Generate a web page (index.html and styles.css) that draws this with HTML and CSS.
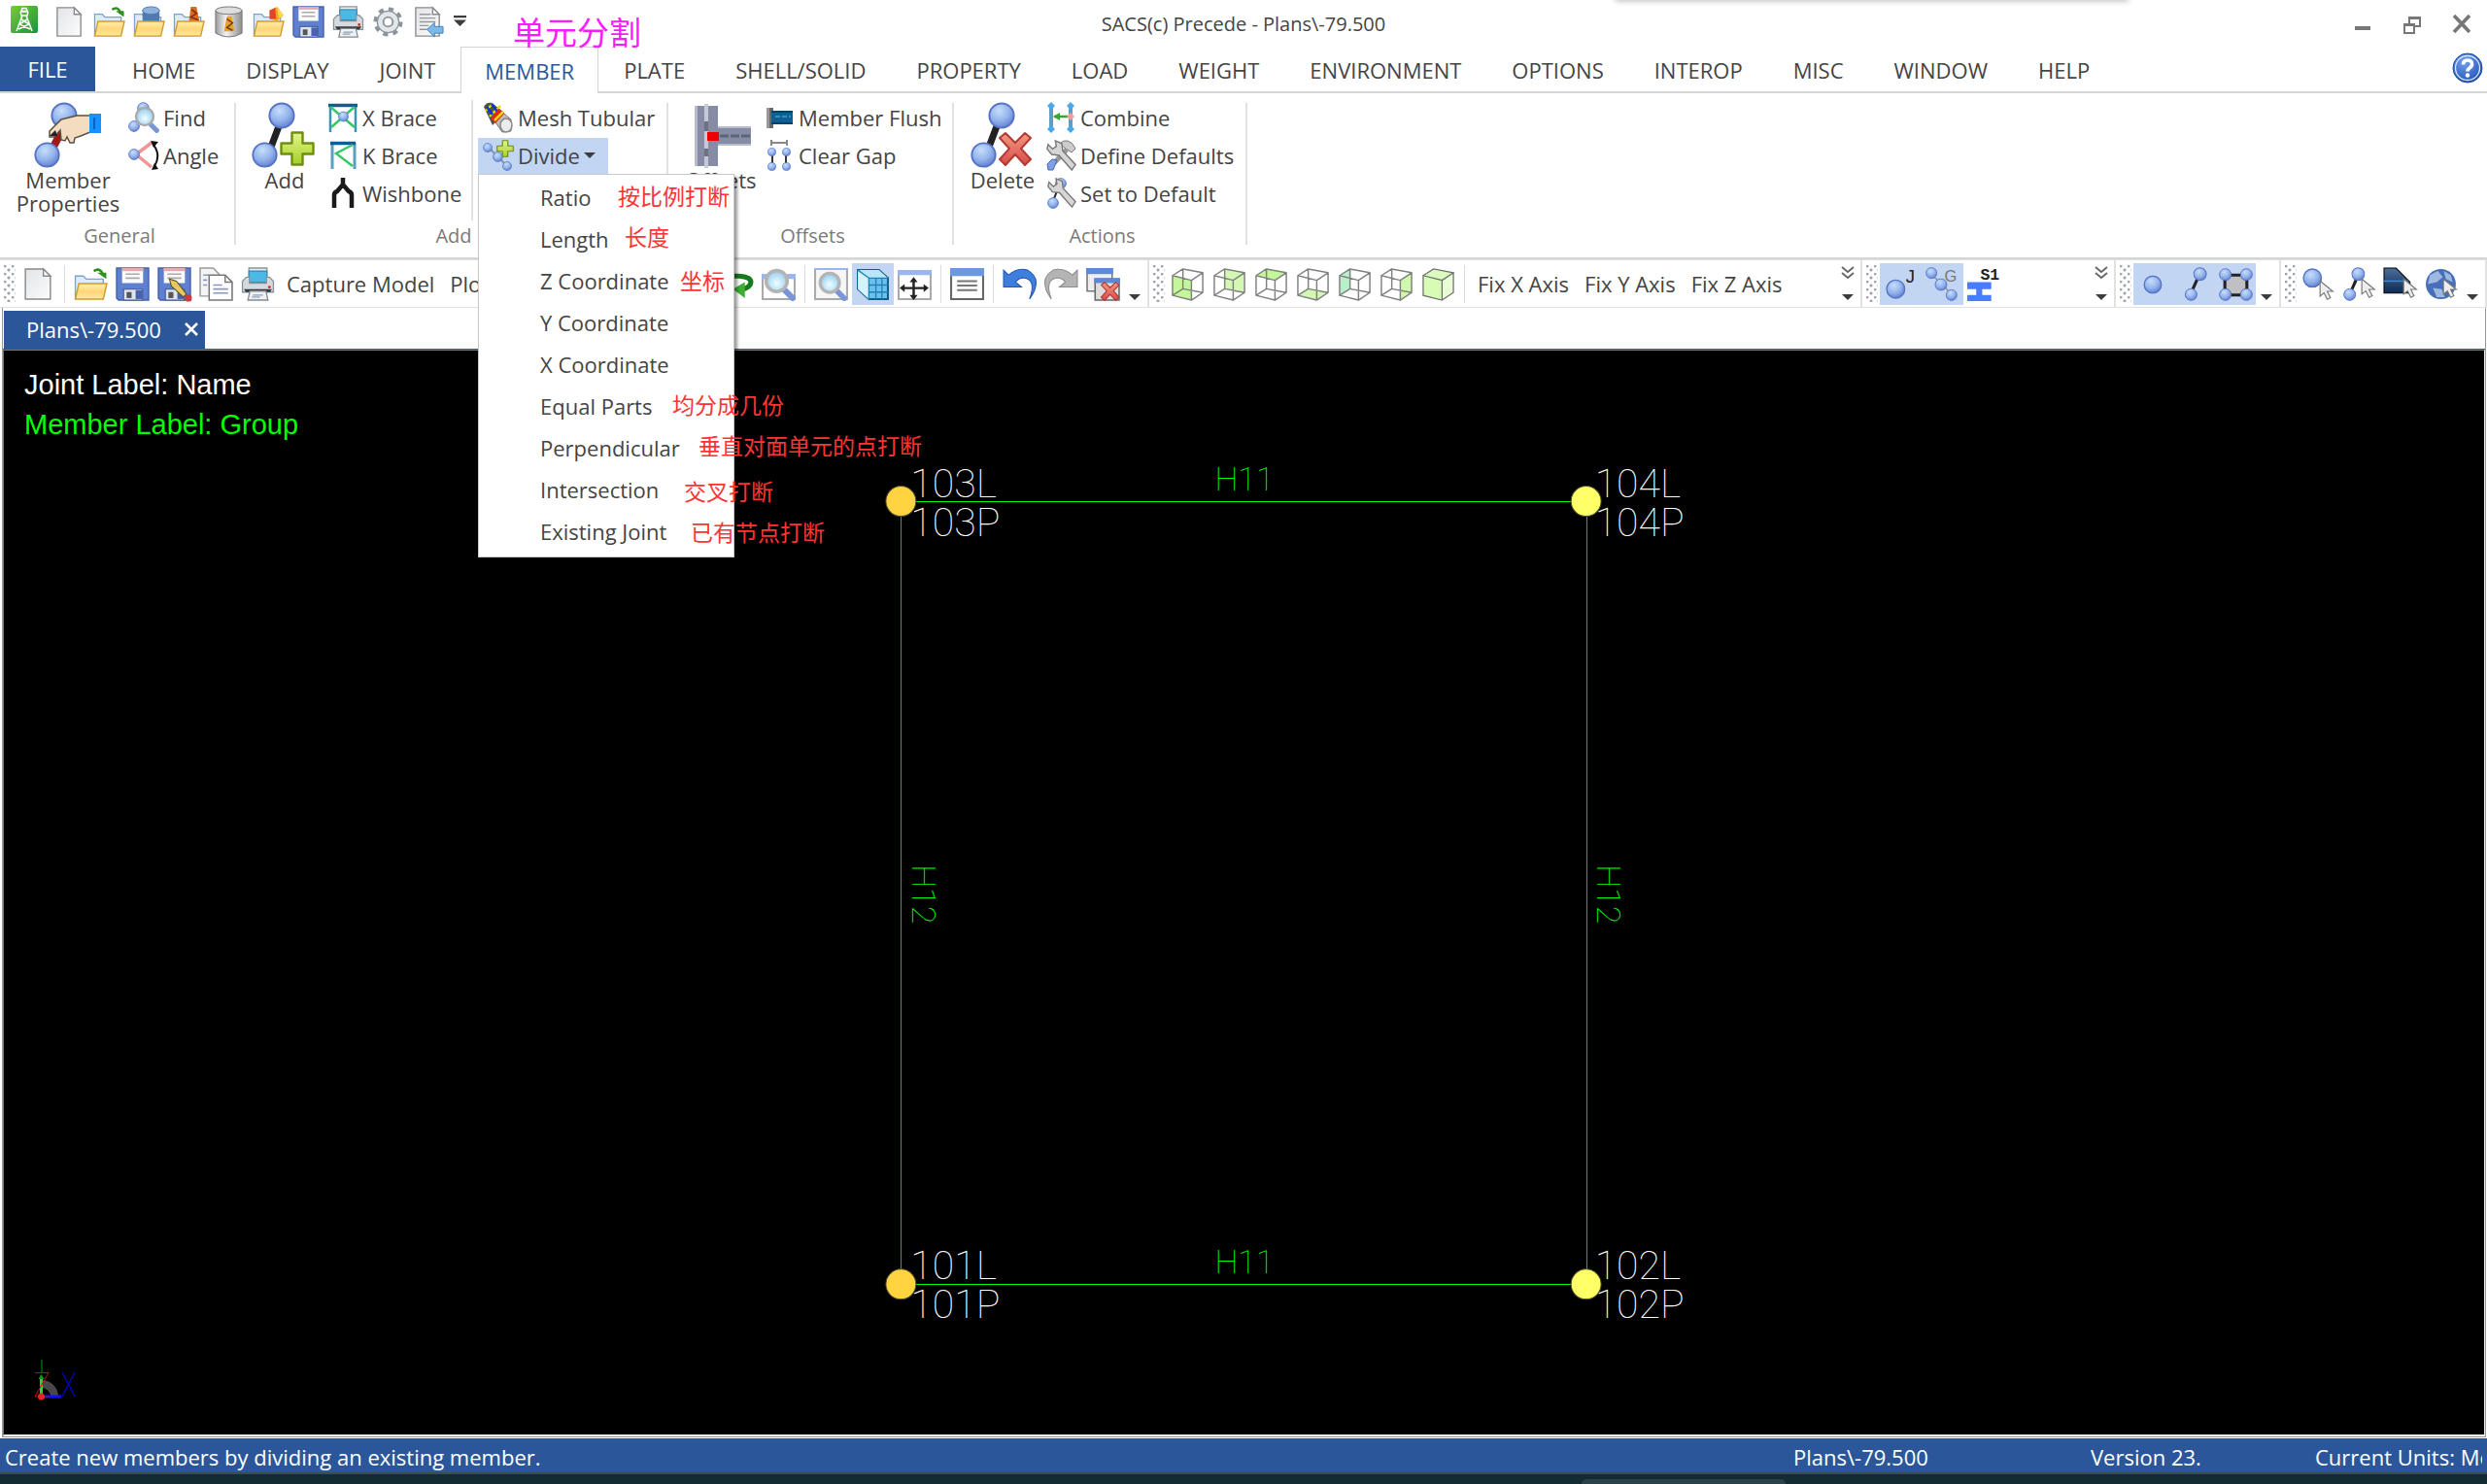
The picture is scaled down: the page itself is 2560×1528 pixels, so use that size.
FILE: index.html
```html
<!DOCTYPE html>
<html lang="en">
<head>
<meta charset="utf-8">
<title>SACS(c) Precede - Plans\-79.500</title>
<link rel="stylesheet" href="styles.css">
</head>
<body>
<svg class="defs" width="0" height="0" aria-hidden="true">
  <defs>
    <radialGradient id="gBall" cx=".4" cy=".3" r=".75"><stop offset="0" stop-color="#c6defb"/><stop offset=".55" stop-color="#94b4ec"/><stop offset="1" stop-color="#5f79cf"/></radialGradient>
    <linearGradient id="gFolder" x2="0" y2="1"><stop offset="0" stop-color="#fff0b8"/><stop offset=".5" stop-color="#ffd676"/><stop offset="1" stop-color="#fbe7a0"/></linearGradient>
    <linearGradient id="gGreen" x2="1" y2="1"><stop offset="0" stop-color="#7cc93c"/><stop offset="1" stop-color="#16953a"/></linearGradient>
    <linearGradient id="gPage" x2="1" y2="1"><stop offset="0" stop-color="#e2e4e8"/><stop offset="1" stop-color="#fcfcfc"/></linearGradient>
    <linearGradient id="gPlus" x2="0" y2="1"><stop offset="0" stop-color="#e4f58a"/><stop offset="1" stop-color="#a6cf2a"/></linearGradient>
    <linearGradient id="gRed" x2="0" y2="1"><stop offset="0" stop-color="#f29a80"/><stop offset="1" stop-color="#d94a4a"/></linearGradient>
    <linearGradient id="gCyl" x2="1" y2="0"><stop offset="0" stop-color="#9a9a9a"/><stop offset=".4" stop-color="#f4f4f4"/><stop offset="1" stop-color="#8c8c8c"/></linearGradient>
    <linearGradient id="gNavy" x2="0" y2="1"><stop offset="0" stop-color="#4a6f9c"/><stop offset="1" stop-color="#0d2a52"/></linearGradient>
    <radialGradient id="gLens" cx=".5" cy=".6" r=".6"><stop offset="0" stop-color="#f2feff"/><stop offset="1" stop-color="#8ecdf0"/></radialGradient>
    <radialGradient id="gHelp" cx=".4" cy=".3" r=".8"><stop offset="0" stop-color="#6ea0f0"/><stop offset="1" stop-color="#1c4bb0"/></radialGradient>
  </defs>
  <symbol id="ball" viewBox="0 0 20 20"><circle cx="10" cy="10" r="9" fill="url(#gBall)" stroke="#5674c6" stroke-width="1.4"/></symbol>
  <symbol id="page" viewBox="0 0 34 34"><path d="M4 2h18l7 7v23H4z" fill="url(#gPage)" stroke="#8a8a8a" stroke-width="1.4"/><path d="M22 2v7h7z" fill="#fff" stroke="#8a8a8a" stroke-width="1.4"/></symbol>
  <symbol id="folder" viewBox="0 0 34 34"><path d="M1.500 31V9h8l3 3h17v12z" fill="#dcecfa" stroke="#7da3cc" stroke-width="1.300"/><path d="M5 16.500h28l-3.500 15.500H1.500z" fill="url(#gFolder)" stroke="#d29a2c" stroke-width="1.400"/></symbol>
  <symbol id="open" viewBox="0 0 34 34"><use href="#folder"/><path d="M20 4q6-4 9 3" fill="none" stroke="#2f8f1e" stroke-width="2.500"/><path d="M25 6h7v5z" fill="#2f8f1e" stroke="#2f8f1e"/></symbol>
  <symbol id="floppy" viewBox="0 0 34 34"><path d="M1 1h32v32H3l-2-2z" fill="#5f7fcf" stroke="#4560ae" stroke-width="1.400"/><path d="M6.500 1h21v15h-21z" fill="#fafafa"/><path d="M6.500 1h21v3h-21z" fill="#e2abb4"/><path d="M10 7h14M10 11h14" stroke="#aaa" stroke-width="1.600"/><path d="M8 22h19v11H8z" fill="#dfe4ec" stroke="#3f5595"/><path d="M11 25h5v6h-5z" fill="#555"/><path d="M20 23h7v9h-7z" fill="#4962ac"/></symbol>
  <symbol id="printer" viewBox="0 0 34 34"><path d="M8 1h18v10H8z" fill="#e8eef2" stroke="#8a949c" stroke-width="1.300"/><path d="M8 4h18v11H8z" fill="#4cb8e4" stroke="#2b86b2"/><path d="M1.500 14l4-4h3v6h17v-6h3l4 4v11h-31z" fill="#d4dade" stroke="#8a9298" stroke-width="1.300"/><path d="M3 22h28l-2 3H5z" fill="#34383c"/><path d="M9 24h16l2 9H7z" fill="#eef2f4" stroke="#7f8a92" stroke-width="1.300"/><path d="M12 28h10M11 30h8" stroke="#8fa0b4" stroke-width="1.200"/><circle cx="28.500" cy="20" r="1.400" fill="#e02020"/></symbol>
  <symbol id="plus" viewBox="0 0 36 36"><path d="M12.500 1.500h11v11h11v11h-11v11h-11v-11h-11v-11h11z" fill="url(#gPlus)" stroke="#6e8f10" stroke-width="2.400" stroke-linejoin="round"/></symbol>
  <symbol id="cross" viewBox="0 0 36 36"><path d="M2 7l6-5 10 10L28 2l6 5-10 11 10 11-6 6-10-11L8 35l-6-6 10-11z" fill="url(#gRed)" stroke="#b43a34" stroke-width="2" stroke-linejoin="round"/></symbol>
  <symbol id="lens" viewBox="0 0 34 34"><path d="M22 22l9 9" stroke="#7b96d6" stroke-width="6" stroke-linecap="round"/><circle cx="15" cy="14" r="10.500" fill="url(#gLens)" stroke="#b4b4b4" stroke-width="3.500"/></symbol>
  <symbol id="wrench" viewBox="0 0 34 34"><path d="M3 5l5 5 4-3-1-6 7 3 1 8 14 15-4 6-14-16-8-1-5-6z" fill="#d6d6d6" stroke="#777" stroke-width="1.500"/></symbol>
  <symbol id="cursor" viewBox="0 0 20 26"><path d="M2 1v19l5-4 4 8 4-2-4-8h7z" fill="#eee" stroke="#777" stroke-width="1.400"/></symbol>
  <symbol id="wire" viewBox="0 0 36 36"><path d="M2 9l20 5v21L2 30zM2 9L13 2l21 4-12 8M34 6v21l-12 8M13 2v21L2 30M13 23l21 4" fill="none" stroke="#808080" stroke-width="1.500" stroke-linejoin="round"/></symbol>
  <symbol id="caret" viewBox="0 0 12 8"><path d="M0 1h12L6 7z" fill="#3c3c3c"/></symbol>
  <symbol id="chev" viewBox="0 0 14 14"><path d="M1 1l6 5 6-5M1 7l6 5 6-5" fill="none" stroke="#666" stroke-width="1.800"/></symbol>
</svg>

<header class="titlebar">
  <div class="qat">
    <svg class="app-icon" viewBox="0 0 28 28"><rect width="28" height="28" rx="2" fill="url(#gGreen)"/><path d="M10 6h8M10 6l1 4h6l1-4M12 2.500h4l1 3h-6zM12 10L6 26M16 10l6 16M11 14l8 5-11 5M17 14l-8 5 11 5" fill="none" stroke="#fff" stroke-width="1.500"/></svg>
    <button class="qbtn" aria-label="New"><svg><use href="#page"/></svg></button>
    <button class="qbtn" aria-label="Open"><svg><use href="#open"/></svg></button>
    <button class="qbtn" aria-label="Open database"><svg viewBox="0 0 34 34"><use href="#folder"/><path d="M10 5v11h18V5z" fill="#4e7bb0"/><ellipse cx="19" cy="5" rx="9" ry="4" fill="#8fb2dc" stroke="#4e7bb0"/></svg></button>
    <button class="qbtn" aria-label="Open structure"><svg viewBox="0 0 34 34"><use href="#folder"/><path d="M19 1h6l3 15H17z" fill="#d96a1c"/><path d="M20 4l5 4-6 4 8 3" fill="none" stroke="#7d2a10" stroke-width="1.500"/></svg></button>
    <button class="qbtn" aria-label="Database"><svg viewBox="0 0 34 34"><path d="M3 5v24q14 8 28 0V5z" fill="url(#gCyl)" stroke="#777"/><ellipse cx="17" cy="5" rx="14" ry="4" fill="#ddd" stroke="#777"/><path d="M15 11h5l3 16H12z" fill="#e9a120"/><path d="M15 14l6 4-6 5 6 3" fill="none" stroke="#703c10" stroke-width="1.500"/></svg></button>
    <button class="qbtn" aria-label="Import"><svg viewBox="0 0 34 34"><use href="#folder"/><path d="M18 5l8-4 7 9-7 6-8-2z" fill="#f3a52a"/><path d="M18 5l6-3 1 12-7 0z" fill="#e0452a"/><path d="M26 2l7 8-5 3z" fill="#f7dc4a"/></svg></button>
    <button class="qbtn" aria-label="Save"><svg><use href="#floppy"/></svg></button>
    <button class="qbtn" aria-label="Print"><svg><use href="#printer"/></svg></button>
    <button class="qbtn" aria-label="Settings"><svg viewBox="0 0 34 34"><circle cx="17" cy="17" r="13.500" fill="none" stroke="#8c939c" stroke-width="4" stroke-dasharray="5.300 5.300"/><circle cx="17" cy="17" r="11.500" fill="#e4e7ea" stroke="#8c939c" stroke-width="1.300"/><circle cx="17" cy="17" r="5" fill="#fff" stroke="#8c939c" stroke-width="2"/></svg></button>
    <button class="qbtn" aria-label="Report"><svg viewBox="0 0 34 34"><use href="#page"/><path d="M8 9h12M8 13h17M8 17h17M8 21h10M8 25h8" stroke="#9a9a9a" stroke-width="1.500"/><path d="M16 25l8-7v4h9v7h-9v4z" fill="#7db8e8" stroke="#3f83c0"/></svg></button>
    <button class="qmore" aria-label="Customize"><svg viewBox="0 0 16 14"><path d="M1 1h14v2.500H1zM1 6h14l-7 7z" fill="#3c3c3c"/></svg></button>
  </div>
  <h1 class="title">SACS(c) Precede - Plans\-79.500</h1>
  <div class="winctl">
    <button aria-label="Minimize"><svg viewBox="0 0 20 20"><path d="M2 12h16v4H2z" fill="#777"/></svg></button>
    <button aria-label="Restore"><svg viewBox="0 0 20 20"><path d="M7 3h11v9H7z" fill="none" stroke="#777" stroke-width="2"/><path d="M2 10h10v9H2z" fill="#fff" stroke="#777" stroke-width="2"/><path d="M1 9h12v3H1zM6 2h13v3H6z" fill="#777"/></svg></button>
    <button aria-label="Close"><svg viewBox="0 0 20 20"><path d="M2 1l16 17M18 1L2 18" stroke="#777" stroke-width="3.600"/></svg></button>
  </div>
  <div class="top-shade"></div>
  <span class="note note-title">单元分割</span>
</header>

<nav class="tabs">
  <button class="tab tab-file">FILE</button>
  <button class="tab">HOME</button>
  <button class="tab">DISPLAY</button>
  <button class="tab">JOINT</button>
  <button class="tab tab-active">MEMBER</button>
  <button class="tab">PLATE</button>
  <button class="tab">SHELL/SOLID</button>
  <button class="tab">PROPERTY</button>
  <button class="tab">LOAD</button>
  <button class="tab">WEIGHT</button>
  <button class="tab">ENVIRONMENT</button>
  <button class="tab">OPTIONS</button>
  <button class="tab">INTEROP</button>
  <button class="tab">MISC</button>
  <button class="tab">WINDOW</button>
  <button class="tab">HELP</button>
  <button class="help" aria-label="Help topics"><svg viewBox="0 0 32 32"><circle cx="16" cy="16" r="15" fill="url(#gHelp)" stroke="#1f4aa0"/><circle cx="16" cy="16" r="12.500" fill="none" stroke="#dbe7fb" stroke-width="1.300"/><path d="M11.500 12.500q0-4.500 4.500-4.500t4.500 4q0 2.500-2.500 4-2 1.300-2 3.500" fill="none" stroke="#fff" stroke-width="3.600"/><circle cx="16" cy="23.500" r="2.200" fill="#fff"/></svg></button>
</nav>

<section class="ribbon">
  <div class="group g-general">
    <div class="gbody">
      <button class="large wide"><svg viewBox="0 0 70 70"><use href="#ball" x="17" y="2" width="28" height="28"/><path d="M28 33L19 50" stroke="#a01818" stroke-width="8"/><use href="#ball" x="0" y="43" width="27" height="27"/><path d="M58 16l-14 0-16 4-12 12 0 6 5 0 6-7 1 10 4 1 2-4 3 6 4 0 1-5 6-2 10-4z" fill="#f3dcc0" stroke="#5a5048" stroke-width="1.500"/><path d="M16 37l6-6 2 6z" fill="#222"/><path d="M57 14h12v20H57z" fill="#1493ff"/><path d="M61 18h2v12h-2z" fill="#0560c8"/></svg><span>Member<br>Properties</span></button>
      <div class="stack">
        <button class="row"><svg viewBox="0 0 32 32"><use href="#ball" x="9" y="0" width="13" height="13"/><use href="#ball" x="0" y="19" width="12" height="12"/><path d="M22 22l9 9" stroke="#7b96d6" stroke-width="5"/><circle cx="17" cy="15" r="9" fill="url(#gLens)" stroke="#aaa" stroke-width="2.400"/></svg>Find</button>
        <button class="row"><svg viewBox="0 0 32 32"><path d="M8 15L24 3M8 15l16 13" stroke="#f19595" stroke-width="3.500"/><use href="#ball" x="0" y="9" width="12" height="12"/><path d="M26 5q8 11 1 22" fill="none" stroke="#111" stroke-width="2"/><path d="M23 1l8 1-5 6zM24 31l7-1-4-6z" fill="#111"/></svg>Angle</button>
      </div>
    </div>
    <div class="glabel">General</div>
  </div>
  <div class="group g-add">
    <div class="gbody">
      <button class="large"><svg viewBox="0 0 70 70"><path d="M29 27l-9 24" stroke="#222" stroke-width="7"/><use href="#ball" x="18" y="2" width="28" height="28"/><use href="#ball" x="1" y="43" width="27" height="27"/><use href="#plus" x="30" y="32" width="36" height="36"/></svg><span>Add</span></button>
      <div class="stack braces">
        <button class="row"><svg viewBox="0 0 32 32"><path d="M3 31V4M29 31V4" stroke="#3c94b4" stroke-width="2.500"/><path d="M1 3.500h30" stroke="#0e5e94" stroke-width="3.500"/><path d="M3 5l25 21M28 5L4 26" stroke="#38c868" stroke-width="2.500"/><use href="#ball" x="11" y="9" width="11" height="12"/></svg>X Brace</button>
        <button class="row"><svg viewBox="0 0 32 32"><path d="M5 30V3M28 30V3" stroke="#5ba0bf" stroke-width="3"/><path d="M3 3.500h26" stroke="#0e5e94" stroke-width="3.500"/><path d="M26 5L9 14l17 13" fill="none" stroke="#38c868" stroke-width="2.500"/></svg>K Brace</button>
        <button class="row"><svg viewBox="0 0 32 32"><path d="M16 0v8M7 31V18q0-3 3-4l6-7 6 7q3 1 3 4v13" fill="none" stroke="#1a1a1a" stroke-width="4.500"/></svg>Wishbone</button>
      </div>
      <div class="inner-sep"></div>
      <div class="stack">
        <button class="row"><svg viewBox="0 0 32 32"><path d="M2 5l7-4 20 17 0 12-9 1z" fill="#bdbdbd" stroke="#777"/><path d="M1 5q3-5 8-4l13 10-12 13z" fill="#4a554a"/><path d="M3 9l7-7M7 15l11-11" stroke="#d8e000" stroke-width="2.400"/><path d="M4 5l6 8M9 2l6 8" stroke="#1030e0" stroke-width="2.600"/><path d="M8 17l8-10 6 5-9 10z" fill="#e02818"/><path d="M12 19l9-9" stroke="#f6d800" stroke-width="2.500"/><ellipse cx="24" cy="24" rx="6" ry="7" fill="#ececec" stroke="#888" stroke-width="1.500"/></svg>Mesh Tubular</button>
        <div class="divide">
          <button class="row row-open" aria-expanded="true"><svg viewBox="0 0 32 32"><path d="M6 8l10 10 10 10" stroke="#8a94a4" stroke-width="2"/><use href="#ball" x="0" y="3" width="10" height="10"/><use href="#ball" x="10" y="12" width="11" height="11"/><use href="#ball" x="20" y="22" width="10" height="10"/><use href="#plus" x="14" y="0" width="18" height="18"/></svg>Divide<svg class="caret"><use href="#caret"/></svg></button>
          <ul class="menu">
            <li><button>Ratio</button></li>
            <li><button>Length</button></li>
            <li><button>Z Coordinate</button></li>
            <li><button>Y Coordinate</button></li>
            <li><button>X Coordinate</button></li>
            <li><button>Equal Parts</button></li>
            <li><button>Perpendicular</button></li>
            <li><button>Intersection</button></li>
            <li><button>Existing Joint</button></li>
          </ul>
          <span class="note n1">按比例打断</span>
          <span class="note n2">长度</span>
          <span class="note n3">坐标</span>
          <span class="note n4">均分成几份</span>
          <span class="note n5">垂直对面单元的点打断</span>
          <span class="note n6">交叉打断</span>
          <span class="note n7">已有节点打断</span>
        </div>
      </div>
    </div>
    <div class="glabel">Add</div>
  </div>
  <div class="group g-offsets">
    <div class="gbody">
      <button class="large mid"><svg viewBox="0 0 70 70"><path d="M8 6h24v62H8z" fill="#858ca4"/><path d="M8 6h3v62H8z" fill="#b6bccb"/><path d="M20 4v66" stroke="#c3c9d6" stroke-width="4"/><path d="M20 22v10M20 50v8" stroke="#6c7282" stroke-width="4"/><path d="M32 27h34v20H32z" fill="#858ca4"/><path d="M32 28h34M32 46h34" stroke="#b6bccb" stroke-width="2"/><path d="M34 37h32" stroke="#5c6476" stroke-width="3" stroke-dasharray="9 2"/><path d="M21 33h12v9H21z" fill="#ee0000"/></svg><span>Offsets</span></button>
      <div class="stack">
        <button class="row"><svg viewBox="0 0 32 32"><path d="M3 6h7v21H3z" fill="#6a6a6a"/><path d="M3 6h3v21H3z" fill="#999"/><path d="M8 9h22v14H8z" fill="#0d5f95"/><path d="M8 9h22v2H8zM8 21h22v2H8z" fill="#064166"/><path d="M12 15h16" stroke="#4d9ac8" stroke-width="1.500" stroke-dasharray="5 2"/></svg>Member Flush</button>
        <button class="row"><svg viewBox="0 0 32 32"><path d="M8 3h16M8 0v6M24 0v6" stroke="#888" stroke-width="2"/><path d="M9 12v16M23 12v16" stroke="#222" stroke-width="1.800"/><use href="#ball" x="4" y="8" width="9" height="9"/><use href="#ball" x="19" y="8" width="9" height="9"/><use href="#ball" x="4" y="23" width="9" height="9"/><use href="#ball" x="19" y="23" width="9" height="9"/></svg>Clear Gap</button>
      </div>
    </div>
    <div class="glabel">Offsets</div>
  </div>
  <div class="group g-actions">
    <div class="gbody">
      <button class="large"><svg viewBox="0 0 70 70"><path d="M29 27l-9 24" stroke="#222" stroke-width="7"/><use href="#ball" x="20" y="2" width="28" height="28"/><use href="#ball" x="2" y="43" width="27" height="27"/><use href="#cross" x="30" y="32" width="36" height="36"/></svg><span>Delete</span></button>
      <div class="stack">
        <button class="row"><svg viewBox="0 0 32 32"><path d="M6 4v24M26 4v24" stroke="#5ba0bf" stroke-width="4"/><path d="M6 0l4 4-4 4-4-4zM26 0l4 4-4 4-4-4zM6 24l4 4-4 4-4-4zM26 24l4 4-4 4-4-4z" fill="#49a8ea"/><path d="M9 15h14" stroke="#2fa82f" stroke-width="2.500"/><path d="M8 15l7-4v8z" fill="#2fa82f"/><path d="M26 11l4 4-4 4-4-4z" fill="#f79a9a"/></svg>Combine</button>
        <button class="row"><svg viewBox="0 0 32 32"><path d="M15 4q3-4 8-3t8 8l-4 4-6-4z" fill="#ccc" stroke="#777"/><path d="M22 10L9 24" stroke="#9a9a9a" stroke-width="5"/><path d="M12 21l-4 10-5 0-1-6 5-5z" fill="#7fa0e2" stroke="#4a68b8"/><use href="#wrench" x="0" y="0" width="32" height="32"/></svg>Define Defaults</button>
        <button class="row"><svg viewBox="0 0 32 32"><path d="M15 6L8 24" stroke="#222" stroke-width="2"/><use href="#ball" x="10" y="0" width="12" height="12"/><use href="#wrench" x="1" y="0" width="31" height="31"/><use href="#ball" x="2" y="20" width="12" height="12"/></svg>Set to Default</button>
      </div>
    </div>
    <div class="glabel">Actions</div>
  </div>
</section>

<div class="bands">
  <div class="band">
    <i class="grip"></i>
    <button class="tool" aria-label="New"><svg><use href="#page"/></svg></button>
    <i class="sep"></i>
    <button class="tool" aria-label="Open"><svg><use href="#open"/></svg></button>
    <button class="tool" aria-label="Save"><svg><use href="#floppy"/></svg></button>
    <button class="tool" aria-label="Save as"><svg viewBox="0 0 34 34"><use href="#floppy"/><path d="M12 12l7 2 10 13-3 3-12-11z" fill="#e8c860" stroke="#5a4a20"/><circle cx="31" cy="31" r="3.500" fill="#cc3a3a"/></svg></button>
    <button class="tool" aria-label="Copy"><svg viewBox="0 0 34 34"><path d="M1 1h13l6 6v22H1z" fill="#f4f4f6" stroke="#999" stroke-width="1.400"/><path d="M10 8h16l7 7v18H10z" fill="#fff" stroke="#777" stroke-width="1.500"/><path d="M26 8v7h7" fill="none" stroke="#777" stroke-width="1.400"/><path d="M14 18h9M14 22h15M14 26h15M4 8h6M4 13h4M4 18h4" stroke="#8c98c0" stroke-width="1.600"/></svg></button>
    <button class="tool" aria-label="Print"><svg><use href="#printer"/></svg></button>
    <button class="ttext">Capture Model</button>
    <button class="ttext">Plot</button>
    <div class="band-right">
      <button class="tool" aria-label="Rotate"><svg viewBox="0 0 34 34"><path d="M2 9h17q12 1 12 6t-10 8" fill="none" stroke="#187a1c" stroke-width="5"/><path d="M25 15l0 16-12-9z" fill="#3fae34"/></svg></button>
      <button class="tool" aria-label="Zoom extents"><svg viewBox="0 0 34 34"><path d="M1 8h32v24H1z" fill="#fff" stroke="#aaa" stroke-width="2"/><path d="M0 7h34v5H0z" fill="#9ab6ec"/><use href="#lens"/></svg></button>
      <i class="sep"></i>
      <button class="tool" aria-label="Zoom window"><svg viewBox="0 0 34 34"><path d="M1 2h32v30H1z" fill="#f6f6f6" stroke="#aaa" stroke-width="2"/><path d="M0 1h34v2H0z" fill="#9ab6ec"/><use href="#lens" x="2" y="3" width="31" height="31"/></svg></button>
      <button class="tool on" aria-label="Shaded view"><svg viewBox="0 0 34 34"><path d="M2 3h21l9 8v21H13L2 22z" fill="#6cc0f0" stroke="#0f5f8c" stroke-width="2"/><path d="M2 3h21l9 8H13z" fill="#b8e6fc"/><path d="M2 3l11 8v21L2 22z" fill="#d6f2ff"/><path d="M13 11h19M13 18h19M13 25h19M13 11v21M20 11v21M26 11v21M2 3l11 8" fill="none" stroke="#1f82b4" stroke-width="1.300"/></svg></button>
      <button class="tool" aria-label="Pan"><svg viewBox="0 0 34 34"><path d="M1 5h32v27H1z" fill="#fff" stroke="#aaa" stroke-width="2"/><path d="M0 3h34v5H0z" fill="#9ab6ec"/><path d="M16 12v19M4 21h25" stroke="#222" stroke-width="2.400"/><path d="M16 10l4 5h-8zM16 33l4-5h-8zM2 21l5-4v8zM31 21l-5-4v8z" fill="#222"/></svg></button>
      <i class="sep"></i>
      <button class="tool" aria-label="List"><svg viewBox="0 0 34 34"><path d="M1 2h32v30H1z" fill="#fdfdfd" stroke="#666" stroke-width="2"/><path d="M0 1h34v8H0z" fill="#6c98e0"/><path d="M7 14h20M7 18.500h20M7 23h20" stroke="#777" stroke-width="2"/></svg></button>
      <i class="sep"></i>
      <button class="tool" aria-label="Undo"><svg viewBox="0 0 34 34"><path d="M1 3l5 5q9-8 19-5 16 9 2 29 7-19-5-21-5-1-9 4l6 5H1z" fill="#3f7edc" stroke="#2358b0"/></svg></button>
      <button class="tool" aria-label="Redo"><svg viewBox="0 0 34 34"><path d="M33 3l-5 5Q19 0 9 3-7 12 7 32 0 13 12 11q5-1 9 4l-6 5h18z" fill="#b4b4b4" stroke="#8c8c8c"/></svg></button>
      <button class="tool" aria-label="Close windows"><svg viewBox="0 0 34 34"><path d="M1 2h25v22H1z" fill="#eee" stroke="#777" stroke-width="1.500"/><path d="M0 1h27v6H0z" fill="#5c88d8"/><path d="M9 12h24v21H9z" fill="#ddd" stroke="#666" stroke-width="1.500"/><path d="M8 11h26v5H8z" fill="#5c88d8"/><use href="#cross" x="14" y="14" width="20" height="20"/></svg></button>
      <button class="more" aria-label="More"><svg class="caret"><use href="#caret"/></svg></button>
    </div>
  </div>
  <div class="band">
    <i class="grip"></i>
    <button class="tool" aria-label="Front"><svg viewBox="0 0 36 36"><path d="M2 9l20 5v21L2 30z" fill="#c4f79a"/><use href="#wire"/></svg></button>
    <button class="tool" aria-label="Back"><svg viewBox="0 0 36 36"><path d="M13 2l21 4v21l-21-4z" fill="#d4f8b4"/><use href="#wire"/></svg></button>
    <button class="tool" aria-label="Top"><svg viewBox="0 0 36 36"><path d="M2 9L13 2l21 4-12 8z" fill="#c4f79a"/><use href="#wire"/></svg></button>
    <button class="tool" aria-label="Bottom"><svg viewBox="0 0 36 36"><path d="M2 30l11-7 21 4-12 8z" fill="#d4f8b4"/><use href="#wire"/></svg></button>
    <button class="tool" aria-label="Left"><svg viewBox="0 0 36 36"><path d="M2 9l11-7v21L2 30z" fill="#b8f0cc"/><use href="#wire"/></svg></button>
    <button class="tool" aria-label="Right"><svg viewBox="0 0 36 36"><path d="M22 14l12-8v21l-12 8z" fill="#d0f8ac"/><use href="#wire"/></svg></button>
    <button class="tool" aria-label="Isometric"><svg viewBox="0 0 36 36"><path d="M2 9l20 5v21L2 30z" fill="#d8fbb6"/><path d="M2 9L13 2l21 4-12 8z" fill="#dcfac0"/><path d="M22 14l12-8v21l-12 8z" fill="#e8fdd4"/><path d="M2 9l20 5v21L2 30zM2 9L13 2l21 4-12 8M34 6v21l-12 8" fill="none" stroke="#707070" stroke-width="1.300"/></svg></button>
    <i class="sep"></i>
    <button class="ttext">Fix X Axis</button>
    <button class="ttext">Fix Y Axis</button>
    <button class="ttext">Fix Z Axis</button>
    <button class="more end" aria-label="More"><svg class="chev"><use href="#chev"/></svg><svg class="caret"><use href="#caret"/></svg></button>
  </div>
  <div class="band">
    <i class="grip"></i>
    <button class="tool on" aria-label="Joint labels"><svg viewBox="0 0 34 34"><use href="#ball" x="2" y="12" width="20" height="20"/><text x="22" y="16" class="glyph">J</text></svg></button>
    <button class="tool on" aria-label="Group labels"><svg viewBox="0 0 34 34"><path d="M5 6l22 22" stroke="#8a94a4" stroke-width="1.500"/><use href="#ball" x="0" y="0" width="12" height="12"/><use href="#ball" x="9" y="11" width="13" height="13"/><use href="#ball" x="20" y="22" width="12" height="12"/><text x="19" y="15" class="glyph grey">G</text></svg></button>
    <button class="tool" aria-label="Section labels"><svg viewBox="0 0 34 34"><path d="M0 15h24v7h-9v6h9v6H0v-6h9v-6H0z" fill="#4a7cff"/><text x="13" y="13" class="glyph bold">S1</text></svg></button>
    <button class="more end" aria-label="More"><svg class="chev"><use href="#chev"/></svg><svg class="caret"><use href="#caret"/></svg></button>
  </div>
  <div class="band">
    <i class="grip"></i>
    <button class="tool on" aria-label="Show joints"><svg viewBox="0 0 34 34"><use href="#ball" x="7" y="8" width="19" height="19"/></svg></button>
    <button class="tool on" aria-label="Show members"><svg viewBox="0 0 34 34"><path d="M21 8l-8 18" stroke="#222" stroke-width="3"/><use href="#ball" x="15" y="0" width="14" height="14"/><use href="#ball" x="6" y="21" width="14" height="13"/></svg></button>
    <button class="tool on" aria-label="Show plates"><svg viewBox="0 0 34 34"><path d="M6 8h22v20H6z" fill="#c0c0c4" stroke="#222" stroke-width="3"/><use href="#ball" x="0" y="1" width="13" height="13"/><use href="#ball" x="21" y="1" width="13" height="13"/><use href="#ball" x="0" y="21" width="13" height="13"/><use href="#ball" x="21" y="21" width="13" height="13"/></svg></button>
    <button class="more" aria-label="More"><svg class="caret"><use href="#caret"/></svg></button>
  </div>
  <div class="band">
    <i class="grip"></i>
    <button class="tool" aria-label="Select joint"><svg viewBox="0 0 34 34"><use href="#ball" x="1" y="1" width="20" height="20"/><use href="#cursor" x="17" y="13" width="16" height="21"/></svg></button>
    <button class="tool" aria-label="Select member"><svg viewBox="0 0 34 34"><path d="M15 8L7 26" stroke="#222" stroke-width="3"/><use href="#ball" x="8" y="0" width="14" height="14"/><use href="#ball" x="0" y="21" width="13" height="13"/><use href="#cursor" x="17" y="11" width="16" height="21"/></svg></button>
    <button class="tool" aria-label="Select plate"><svg viewBox="0 0 34 34"><path d="M0 1h12l14 14v11H0z" fill="url(#gNavy)" stroke="#000"/><path d="M0 14h24" stroke="#3e86d0" stroke-width="1.500"/><use href="#cursor" x="18" y="11" width="16" height="21"/></svg></button>
    <button class="tool" aria-label="Select all"><svg viewBox="0 0 34 34"><circle cx="16" cy="17" r="15" fill="#456fb8"/><path d="M5 8l8-4 5 6-6 5-9 2zM19 4l7 4 2 7-7-3zM8 21l9 1 3 8-8 0z" fill="#9fb8e0"/><use href="#cursor" x="17" y="11" width="16" height="21"/></svg></button>
    <button class="more" aria-label="More"><svg class="caret"><use href="#caret"/></svg></button>
  </div>
</div>

<main class="doc">
  <div class="doctabs">
    <div class="doctab"><span>Plans\-79.500</span><button aria-label="Close view"><svg viewBox="0 0 16 16"><path d="M2 2l12 12M14 2L2 14" stroke="#fff" stroke-width="2.600"/></svg></button></div>
  </div>
  <div class="canvas">
    <div class="legend"><p>Joint Label: Name</p><p class="green">Member Label: Group</p></div>
    <svg class="model" viewBox="0 0 2552 1116">
      <g shape-rendering="crispEdges">
        <path d="M923 155.500H1628M923 961.500H1628" stroke="#00ff00"/>
        <path d="M923.500 155V961M1628.500 155V961" stroke="#00c800"/>
      </g>
      <g class="jl">
        <text x="933" y="151">103L</text><text x="933" y="191">103P</text>
        <text x="1637" y="151">104L</text><text x="1637" y="191">104P</text>
        <text x="933" y="956">101L</text><text x="933" y="996">101P</text>
        <text x="1637" y="956">102L</text><text x="1637" y="996">102P</text>
      </g>
      <g class="ml">
        <text x="1246" y="144">H11</text><text x="1246" y="950">H11</text>
        <text transform="translate(935 529) rotate(90)">H12</text>
        <text transform="translate(1639 529) rotate(90)">H12</text>
      </g>
      <g stroke="#4a4a30" stroke-width="1">
        <circle cx="923" cy="155" r="15.500" fill="#ffd440"/><circle cx="923" cy="961" r="15.500" fill="#ffd440"/>
        <circle cx="1628" cy="155" r="15.500" fill="#ffff66"/><circle cx="1628" cy="961" r="15.500" fill="#ffff66"/>
      </g>
    </svg>
    <svg class="axes" viewBox="0 0 46 46">
      <path d="M9 21a17 17 0 0 1 17 17h-8a9 9 0 0 0-9-9z" fill="#484848"/>
      <path d="M9 0v14" stroke="#006800" stroke-width="1.500"/><path d="M8.500 18v20" stroke="#1ee01e" stroke-width="3"/><path d="M8.500 15l3 5h-6z" fill="#0a9a0a"/>
      <path d="M9 38h20" stroke="#1010ff" stroke-width="3"/>
      <path d="M2 13.500h14L2 38h14" fill="none" stroke="#d00000"/><path d="M30 13l13 25M43 13L30 38" stroke="#0000c8" stroke-width="1.300"/>
      <circle cx="8.500" cy="38" r="3.500" fill="#f02020"/>
    </svg>
  </div>
</main>

<footer class="status">
  <span class="msg">Create new members by dividing an existing member.</span>
  <span class="s-plan">Plans\-79.500</span>
  <span class="s-ver">Version 23.</span>
  <span class="s-units">Current Units: Me</span>
</footer>
<div class="desk"><i></i></div>
</body>
</html>
```

FILE: styles.css
```css
* { box-sizing: border-box; }

body {
  margin: 0;
  min-height: 100vh;
  display: flex;
  flex-direction: column;
  background: #fff;
  color: #444;
  font: 22px/30px "Open Sans", "Noto Sans CJK SC", sans-serif;
  overflow: hidden;
}

button {
  margin: 0;
  padding: 0;
  border: 0;
  background: none;
  color: inherit;
  font: inherit;
  white-space: nowrap;
}

svg { display: block; flex: none; }
.defs { position: absolute; }

/* title bar */
.titlebar {
  position: relative;
  display: grid;
  grid-template-columns: 1fr auto 1fr;
  height: 48px;
}
.qat { display: flex; align-items: flex-start; padding: 6px 0 0 11px; }
.app-icon { width: 28px; height: 28px; margin-right: 12px; }
.qbtn { width: 41px; height: 34px; display: flex; justify-content: center; }
.qbtn svg { width: 33px; height: 33px; }
.qmore { width: 24px; height: 30px; display: grid; place-items: center; }
.qmore svg { width: 15px; height: 13px; }
.title { margin: 0; font-size: 20px; font-weight: 400; line-height: 50px; }
.winctl { display: flex; justify-content: flex-end; padding-right: 1px; }
.winctl button { width: 51px; display: grid; place-items: center; }
.winctl svg { width: 20px; height: 20px; }
.top-shade {
  position: absolute;
  top: -10px;
  left: 65%;
  width: 526px;
  height: 10px;
  box-shadow: 0 0 6px 1px #bbb;
}

/* annotations laid over the window */
.note {
  position: absolute;
  z-index: 6;
  color: #ff3333;
  font: 23px/30px "Noto Sans CJK SC", sans-serif;
  white-space: nowrap;
}
.note-title { left: 528px; top: 10px; color: #ff1aff; font-size: 33px; line-height: 44px; }
.n1 { left: 144px; top: 44px; }
.n2 { left: 151px; top: 86px; }
.n3 { left: 208px; top: 131px; }
.n4 { left: 200px; top: 259px; }
.n5 { left: 227px; top: 301px; }
.n6 { left: 212px; top: 348px; }
.n7 { left: 219px; top: 390px; }

/* ribbon tabs */
.tabs {
  display: flex;
  height: 48px;
  border-bottom: 2px solid #d5d5d5;
}
.tab { height: 48px; padding: 0 26px; line-height: 48px; }
.tab-file {
  width: 98px;
  height: 46px;
  margin-right: 12px;
  padding: 0;
  background: #2b579a;
  color: #fff;
  line-height: 44px;
}
.tab-active {
  padding: 0 24px;
  border: 1px solid #d5d5d5;
  border-bottom: 0;
  background: #fff;
  color: #2b579a;
}
.help { margin: 6px 4px 0 auto; width: 32px; height: 32px; }
.help svg { width: 32px; height: 32px; }

/* ribbon */
.ribbon { display: flex; border-bottom: 2px solid #d5d5d5; }
.group { position: relative; padding: 7px 0 7px 15px; }
.group::after {
  content: "";
  position: absolute;
  top: 10px;
  right: 0;
  bottom: 13px;
  width: 2px;
  background: #e1e1e1;
}
.g-general { width: 243px; }
.g-add { width: 445px; }
.g-offsets { width: 294px; }
.g-actions { width: 302px; }
.gbody { display: flex; height: 124px; }
.glabel {
  margin-left: -12px;
  padding-top: 1px;
  color: #7a7a7a;
  font-size: 20px;
  text-align: center;
}
.large {
  width: 70px;
  margin-right: 4px;
  display: flex;
  flex-direction: column;
  align-items: center;
  line-height: 24px;
}
.large svg { width: 70px; height: 70px; }
.wide { width: 110px; margin-right: 2px; }
.mid { width: 78px; margin-right: 0; }
.stack { display: flex; flex-direction: column; gap: 2px; align-items: flex-start; }
.braces { width: 148px; }
.inner-sep { width: 2px; height: 124px; margin: 0 5px; background: #e1e1e1; }
.row { height: 37px; padding: 0 0 1px 5px; display: flex; align-items: center; gap: 4px; }
.row svg { width: 32px; height: 32px; }
.caret, .row .caret { width: 12px; height: 8px; }
.row-open { width: 134px; background: #c2d5f2; }
.divide { position: relative; }
.menu {
  position: absolute;
  z-index: 5;
  top: 37px;
  left: 0;
  width: 264px;
  margin: 0;
  padding: 1px 0 5px;
  border: 1px solid #c8c8c8;
  background: #fff;
  list-style: none;
  box-shadow: 3px 3px 3px #0006;
}
.menu button { width: 100%; height: 43px; padding-left: 63px; text-align: left; }

/* docked toolbars */
.bands {
  display: grid;
  grid-template-columns: 1183fr 734fr 261fr 170fr 212fr;
  border-bottom: 1px solid #e1e1e1;
}
.band {
  display: flex;
  align-items: center;
  height: 49px;
  min-width: 0;
  border-right: 2px solid #e1e1e1;
  border-top: 1px solid #e1e1e1;
}
.grip {
  width: 12px;
  height: 38px;
  margin: 0 2px 0 4px;
  background:
    radial-gradient(circle at 1px 1px, #a0a4ae 1px, #fff0 2px) 0 0 / 8px 8px,
    radial-gradient(circle at 5px 5px, #a0a4ae 1px, #fff0 2px) 0 0 / 8px 8px;
}
.tool { width: 43px; height: 43px; display: grid; place-items: center; }
.tool svg { width: 35px; height: 35px; overflow: visible; }
.on { background: #c2d5f2; }
.sep { width: 1px; height: 39px; margin: 0 5px; background: #dcdcdc; }
.ttext { padding: 0 8px; }
.band-right { display: flex; align-items: center; margin-left: auto; }
.more {
  width: 22px;
  height: 36px;
  margin-right: 2px;
  display: flex;
  flex-direction: column;
  align-items: center;
  justify-content: flex-end;
}
.end { margin-left: auto; justify-content: space-between; }
.chev { width: 14px; height: 14px; }
.glyph { font: 18px "Liberation Sans", sans-serif; fill: #222; }
.grey { font-size: 16px; fill: #777; }
.bold { font: bold 16px "Liberation Mono", monospace; }

/* document */
.doc {
  flex: 1;
  display: flex;
  flex-direction: column;
  margin: 0 1px 1px 2px;
  border: solid #999;
  border-width: 0 1px 1px;
}
.doctabs { display: flex; padding: 3px 0 0 1px; border-bottom: 1px solid #2b579a; }
.doctab {
  width: 207px;
  height: 39px;
  padding: 0 6px 2px 23px;
  display: flex;
  align-items: center;
  justify-content: space-between;
  background: #2b579a;
  color: #fff;
}
.doctab svg { width: 16px; height: 16px; }
.canvas {
  position: relative;
  flex: 1;
  display: flex;
  border: 1px solid #777;
  border-right: 1px solid #eee;
  border-bottom: 2px solid #eee;
  background: #000;
}
.legend {
  position: absolute;
  top: 15px;
  left: 21px;
  color: #fff;
  font: 29px/41px "Liberation Sans", sans-serif;
}
.legend p { margin: 0; }
.legend .green { color: #00ff00; }
.model { flex: 1; width: 100%; height: 100%; }
.jl, .ml { font-family: Roboto, sans-serif; font-weight: 100; }
.jl { font-size: 41px; fill: #fff; }
.ml { font-size: 34px; fill: #00ff00; }
.axes { position: absolute; left: 30px; bottom: 31px; width: 46px; height: 46px; }

/* status bar */
.status {
  display: flex;
  height: 35px;
  padding: 0 5px;
  background: #2b579a;
  color: #fff;
  line-height: 38px;
  white-space: nowrap;
}
.status span { overflow: hidden; }
.msg { flex: 1; }
.s-plan { width: 306px; }
.s-ver { width: 231px; }
.s-units { width: 172px; }
.desk { height: 12px; padding: 5px 0 0 1628px; border-top: 2px solid #3d4a4e; background: #132b33; }
.desk i { display: block; width: 210px; height: 5px; border-radius: 5px 5px 0 0; background: #2c4249; }
```
